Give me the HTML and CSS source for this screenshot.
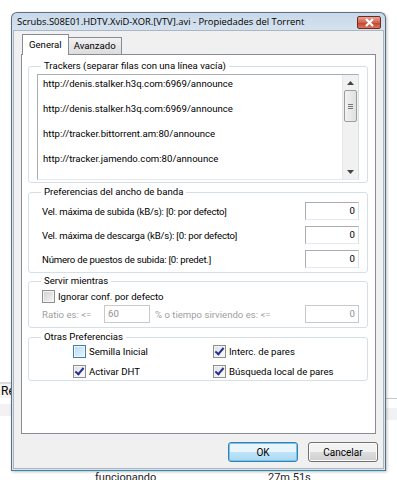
FILE: index.html
```html
<!DOCTYPE html>
<html lang="es">
<head>
  <meta charset="utf-8">
  <title>Propiedades del Torrent</title>
  <link rel="stylesheet" href="styles.css">
</head>
<body>
  <!-- stuff behind the dialog -->
  <div class="desk">
    <div class="desk-left">Re</div>
    <div class="desk-left-bar"></div>
    <div class="desk-right-line"></div>
    <div class="desk-right-bar"></div>
    <div class="desk-bottom">
      <span class="desk-status">funcionando</span>
      <span class="desk-time">27m 51s</span>
    </div>
  </div>

  <div class="window">
    <div class="titlebar">
      <span class="title">Scrubs.S08E01.HDTV.XviD-XOR.[VTV].avi - Propiedades del Torrent</span>
      <span class="close">
        <svg width="11" height="9" viewBox="0 0 11 9">
          <path d="M2 1 L9 8 M9 1 L2 8" stroke="#fff" stroke-width="2.2" fill="none"/>
        </svg>
      </span>
    </div>

    <div class="client">
      <div class="tabs">
        <div class="tab active">General</div>
        <div class="tab">Avanzado</div>
      </div>

      <div class="panel">
        <fieldset class="group trackers">
          <legend>Trackers (separar filas con una línea vacía)</legend>
          <div class="textbox">
            <div class="lines">
              <div>http://denis.stalker.h3q.com:6969/announce</div>
              <div>http://denis.stalker.h3q.com:6969/announce</div>
              <div>http://tracker.bittorrent.am:80/announce</div>
              <div>http://tracker.jamendo.com:80/announce</div>
            </div>
            <div class="scrollbar">
              <div class="arrow">
                <svg width="7" height="4" viewBox="0 0 7 4"><path d="M0 4 L3.5 0 L7 4 Z" fill="#444"/></svg>
              </div>
              <div class="thumb">
                <svg width="5" height="5" viewBox="0 0 5 5"><path d="M0 0.5 H5 M0 2.5 H5 M0 4.5 H5" stroke="#777" stroke-width="1"/></svg>
              </div>
              <div class="track"></div>
              <div class="arrow">
                <svg width="7" height="4" viewBox="0 0 7 4"><path d="M0 0 L7 0 L3.5 4 Z" fill="#444"/></svg>
              </div>
            </div>
          </div>
        </fieldset>

        <fieldset class="group bandwidth">
          <legend>Preferencias del ancho de banda</legend>
          <div class="row">
            <span class="label">Vel. máxima de subida (kB/s): [0: por defecto]</span>
            <span class="field">0</span>
          </div>
          <div class="row">
            <span class="label">Vel. máxima de descarga (kB/s): [0: por defecto]</span>
            <span class="field">0</span>
          </div>
          <div class="row">
            <span class="label">Número de puestos de subida: [0: predet.]</span>
            <span class="field">0</span>
          </div>
        </fieldset>

        <fieldset class="group serve">
          <legend>Servir mientras</legend>
          <div class="check-row">
            <span class="check"></span>
            <span>Ignorar conf. por defecto</span>
          </div>
          <div class="row disabled">
            <span class="ratio-label">Ratio es: &lt;=</span>
            <span class="field small">60</span>
            <span class="ratio-text">% o tiempo sirviendo es: &lt;=</span>
            <span class="field">0</span>
          </div>
        </fieldset>

        <fieldset class="group other">
          <legend>Otras Preferencias</legend>
          <div class="options">
            <div class="col">
              <div class="check-row"><span class="check hover"></span><span>Semilla Inicial</span></div>
              <div class="check-row"><span class="check on"></span><span>Activar DHT</span></div>
            </div>
            <div class="col">
              <div class="check-row"><span class="check on"></span><span>Interc. de pares</span></div>
              <div class="check-row"><span class="check on"></span><span>Búsqueda local de pares</span></div>
            </div>
          </div>
        </fieldset>
      </div>

      <div class="buttons">
        <button class="btn default">OK</button>
        <button class="btn">Cancelar</button>
      </div>
    </div>
  </div>
</body>
</html>
```

FILE: styles.css
```css
body {
  margin: 0;
  width: 397px;
  height: 480px;
  overflow: hidden;
  position: relative;
  background-color: #fff;
  font-family: Roboto, "Open Sans", sans-serif;
  font-size: 9.6px;
  color: #000;
}

/* background window, mostly hidden */
.desk-left {
  position: absolute;
  left: 0;
  top: 382px;
  width: 12px;
  height: 14px;
  overflow: hidden;
  background-color: #f4f4f4;
  border-top: 2px solid #dcdcdc;
  font-size: 12px;
  line-height: 14px;
  padding-left: 1px;
}

.desk-left-bar {
  position: absolute;
  left: 0;
  top: 404px;
  width: 12px;
  height: 12px;
  background-color: #f2f2f2;
}

.desk-right-line {
  position: absolute;
  left: 386px;
  top: 398px;
  width: 11px;
  height: 1px;
  background-color: #c8c8c8;
}

.desk-right-bar {
  position: absolute;
  left: 386px;
  top: 408px;
  width: 11px;
  height: 12px;
  background-color: #f2f2f2;
}

.desk-bottom {
  position: absolute;
  left: 0;
  top: 471px;
  width: 100%;
  font-size: 11px;
  color: #222;
}

.desk-status {
  position: absolute;
  left: 95px;
}

.desk-time {
  position: absolute;
  left: 268px;
}

/* dialog */
.window {
  position: absolute;
  left: 11px;
  top: 12px;
  width: 373px;
  height: 457px;
  border: 1px solid #5e6f80;
  border-bottom-color: #2f8aa5;
  border-radius: 6px 6px 0 0;
  background: linear-gradient(#c9d9e9, #d6e2ee 18px, #dbe5ef);
  box-shadow: 1px 1px 3px rgba(0, 0, 0, 0.25);
  display: flex;
  flex-direction: column;
}

.titlebar {
  height: 17px;
  display: flex;
  align-items: center;
  justify-content: space-between;
  padding: 0 4px 0 5px;
}

.title {
  font-family: "Open Sans", sans-serif;
  font-size: 9.4px;
  color: #000;
  white-space: nowrap;
}

.close {
  width: 22px;
  height: 11px;
  border: 1px solid #6d2a22;
  border-radius: 2px;
  background: linear-gradient(#e8a493, #d2624d 50%, #c0412b 51%, #d8775c);
  display: flex;
  align-items: center;
  justify-content: center;
  margin-top: 1px;
}

.client {
  flex: 1;
  margin: 0 1px 1px 1px;
  background-color: #f0f0f0;
  border: 1px solid #a9b6c3;
  padding: 4px 7px 0 7px;
  display: flex;
  flex-direction: column;
}

.tabs {
  display: flex;
  align-items: flex-end;
  height: 19px;
  padding-left: 2px;
  position: relative;
  z-index: 1;
}

.tab {
  height: 16px;
  line-height: 15px;
  padding: 0 5px;
  border: 1px solid #898c95;
  border-bottom: none;
  background: linear-gradient(#f2f2f2, #dcdcdc);
  margin-left: -1px;
}

.tab.active {
  line-height: 19px;
  background: #fff;
  padding: 0 6px;
  margin-bottom: -1px;
  height: 20px;
}

.panel {
  height: 380px;
  border: 1px solid #898c95;
  background-color: #fff;
  padding: 4px 7px 0 6px;
  box-sizing: border-box;
}

.group {
  margin: 0;
  padding: 0 8px;
  border: 1px solid #d5dfe5;
  border-radius: 3px;
}

.group legend {
  padding: 0 3px;
  margin-left: 4px;
  line-height: 14px;
}

.trackers {
  padding-bottom: 2px;
  margin-bottom: 2px;
}

.bandwidth {
  padding-bottom: 1px;
  margin-bottom: 1px;
}

.serve {
  padding-bottom: 3px;
  margin-bottom: 2px;
}

.other {
  padding-bottom: 2px;
}

/* trackers box */
.textbox {
  height: 104px;
  margin-top: 1px;
  border: 1px solid #abadb3;
  border-right-color: #dbdfe6;
  border-bottom-color: #e3e9ef;
  display: flex;
}

.lines {
  flex: 1;
  padding: 2px 5px;
  overflow: hidden;
}

.lines div {
  line-height: 13px;
  margin-bottom: 12px;
  white-space: nowrap;
}

.scrollbar {
  width: 15px;
  background-color: #f1f1f1;
  border-left: 1px solid #e8e8e8;
  display: flex;
  flex-direction: column;
}

.arrow {
  height: 15px;
  display: flex;
  align-items: center;
  justify-content: center;
}

.thumb {
  height: 30px;
  margin: 0 1px;
  border: 1px solid #9d9d9d;
  border-radius: 2px;
  background: linear-gradient(90deg, #f2f2f2, #e0e0e0);
  display: flex;
  align-items: center;
  justify-content: center;
}

.track {
  flex: 1;
}

/* rows with input fields */
.row {
  display: flex;
  align-items: center;
  height: 24px;
  padding-left: 5px;
}

.label {
  flex: 1;
  letter-spacing: -0.2px;
}

.field {
  width: 46px;
  height: 16px;
  line-height: 16px;
  padding: 0 3px;
  border: 1px solid #abadb3;
  border-right-color: #dbdfe6;
  border-bottom-color: #e3e9ef;
  text-align: right;
  background: #fff;
}

.field.small {
  text-align: left;
  width: 38px;
}

.disabled {
  color: #a0a0a0;
}

.disabled .field {
  border-color: #c9c9c9;
  color: #909090;
}

.serve .row {
  height: 20px;
}

.serve .check-row {
  height: 16px;
  padding-left: 5px;
}

.ratio-label {
  width: 62px;
}

.ratio-text {
  flex: 1;
  padding-left: 5px;
}

/* checkboxes */
.check-row {
  display: flex;
  align-items: center;
  gap: 3px;
  height: 14px;
}

.check {
  width: 11px;
  height: 11px;
  border: 1px solid #8f8f8f;
  background: linear-gradient(135deg, #d0d0d0, #f6f6f6);
  box-shadow: inset 0 0 0 1px #f4f4f4;
  position: relative;
}

.check.hover {
  border-color: #3c7fb1;
  background: linear-gradient(135deg, #b5dbf3, #e6f4fc);
}

.check.on {
  background: linear-gradient(135deg, #e0e0e0, #fcfcfc);
}

.check.on::after {
  content: "";
  position: absolute;
  left: 3px;
  top: 0;
  width: 3px;
  height: 7px;
  border: solid #24318f;
  border-width: 0 2px 2px 0;
  transform: rotate(40deg);
}

.options {
  display: flex;
  padding-left: 36px;
}

.col {
  display: flex;
  flex-direction: column;
  gap: 6px;
}

.col:first-child {
  width: 140px;
}

/* bottom buttons */
.buttons {
  display: flex;
  justify-content: flex-end;
  gap: 10px;
  padding-top: 8px;
  margin-right: -2px;
}

.btn {
  width: 70px;
  height: 20px;
  font-family: inherit;
  font-size: 10px;
  border: 1px solid #707070;
  border-radius: 3px;
  background: linear-gradient(#f2f2f2 50%, #dddddd 51%, #cfcfcf);
  box-shadow: inset 0 0 0 1px #fcfcfc;
  padding: 0;
}

.btn.default {
  border-color: #3c7fb1;
  background: linear-gradient(#e9f5fc 50%, #bfe4f8 51%, #a9d9f2);
  box-shadow: inset 0 0 0 1px #74c4ea;
}
```
